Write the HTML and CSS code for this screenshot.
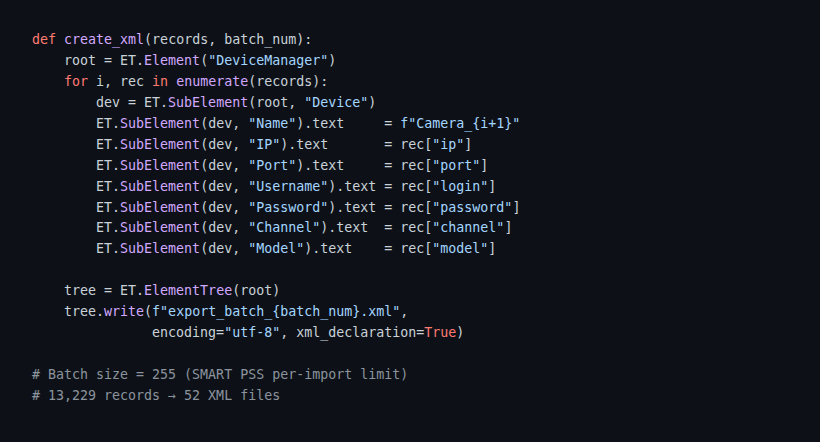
FILE: index.html
```html
<!DOCTYPE html>
<html lang="en">
<head>
<meta charset="utf-8">
<title>create_xml</title>
<link rel="stylesheet" href="styles.css">
</head>
<body>
<div class="code">
<div class="ln"><span class="k">def</span> <span class="f">create_xml</span>(records, batch_num):</div>
<div class="ln">    root = ET.<span class="f">Element</span>(<span class="s">"DeviceManager"</span>)</div>
<div class="ln">    <span class="k">for</span> i, rec <span class="k">in</span> <span class="f">enumerate</span>(records):</div>
<div class="ln">        dev = ET.<span class="f">SubElement</span>(root, <span class="s">"Device"</span>)</div>
<div class="ln">        ET.<span class="f">SubElement</span>(dev, <span class="s">"Name"</span>).text     = <span class="s">f"Camera_{i+1}"</span></div>
<div class="ln">        ET.<span class="f">SubElement</span>(dev, <span class="s">"IP"</span>).text       = rec[<span class="s">"ip"</span>]</div>
<div class="ln">        ET.<span class="f">SubElement</span>(dev, <span class="s">"Port"</span>).text     = rec[<span class="s">"port"</span>]</div>
<div class="ln">        ET.<span class="f">SubElement</span>(dev, <span class="s">"Username"</span>).text = rec[<span class="s">"login"</span>]</div>
<div class="ln">        ET.<span class="f">SubElement</span>(dev, <span class="s">"Password"</span>).text = rec[<span class="s">"password"</span>]</div>
<div class="ln">        ET.<span class="f">SubElement</span>(dev, <span class="s">"Channel"</span>).text  = rec[<span class="s">"channel"</span>]</div>
<div class="ln">        ET.<span class="f">SubElement</span>(dev, <span class="s">"Model"</span>).text    = rec[<span class="s">"model"</span>]</div>
<div class="ln"> </div>
<div class="ln">    tree = ET.<span class="f">ElementTree</span>(root)</div>
<div class="ln">    tree.<span class="f">write</span>(<span class="s">f"export_batch_{batch_num}.xml"</span>,</div>
<div class="ln">               encoding=<span class="s">"utf-8"</span>, xml_declaration=<span class="k">True</span>)</div>
<div class="ln"> </div>
<div class="ln c"># Batch size = 255 (SMART PSS per-import limit)</div>
<div class="ln c"># 13,229 records → 52 XML files</div>
</div>
</body>
</html>
```
FILE: styles.css
```css
html, body {
  margin: 0;
  padding: 0;
  background: #0d1117;
  height: 100%;
}
.code {
  padding: 30px 32px;
  font-family: "DejaVu Sans Mono", "Liberation Mono", monospace;
  font-size: 13.3px;
  line-height: 20.94px;
  color: #c9d1d9;
  background: #0d1117;
}
.ln {
  white-space: pre;
  height: 20.94px;
}
.k { color: #ff7b72; }
.f { color: #d2a8ff; }
.s { color: #a5d6ff; }
.c { color: #8b949e; }
```
